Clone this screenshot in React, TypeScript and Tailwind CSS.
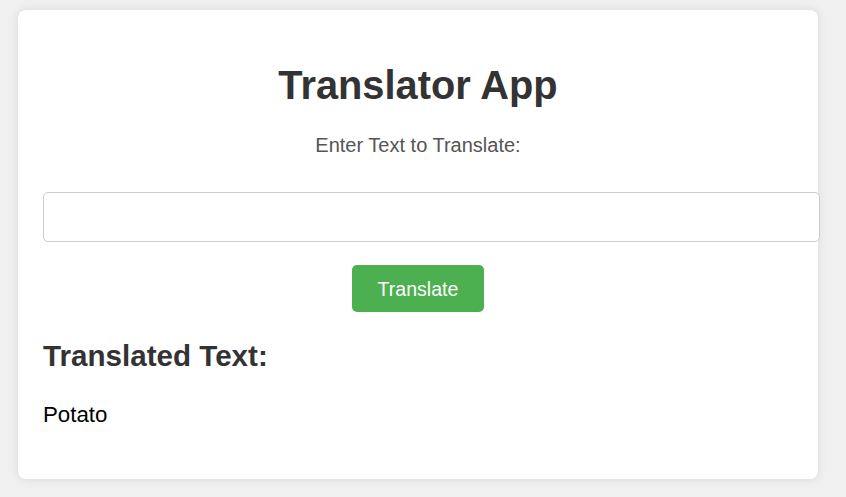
import React from "react";

export default function App() {
  return (
    <div
      className="min-h-[497px] w-[846px] bg-[#f0f0f0] pt-[10px] pl-[18px] overflow-hidden"
      style={{ fontFamily: '"Liberation Sans", Arial, sans-serif' }}
    >
      <div className="w-[800px] h-[469px] bg-white rounded-[8px] shadow-[0_0_10px_rgba(0,0,0,0.1)] px-[25px] pt-[53px]">
        <h1 className="text-center text-[39.8px] leading-[45px] font-bold text-[#333]">
          Translator App
        </h1>
        <p className="mt-[26px] text-center text-[20px] leading-[22px] text-[#555]">
          Enter Text to Translate:
        </p>
        <input
          type="text"
          className="mt-[36px] block w-[777px] h-[50px] border border-[#ccc] rounded-[5px] bg-white outline-none"
        />
        <div className="mt-[23px] flex justify-center">
          <button className="h-[47px] w-[132px] bg-[#4caf50] text-white rounded-[5px] text-[19.6px] leading-[22px] pt-[13px] pb-[12px]">
            Translate
          </button>
        </div>
        <h2 className="mt-[27px] text-[29.6px] leading-[33px] font-bold text-[#333]">
          Translated Text:
        </h2>
        <p className="mt-[30px] text-[22.3px] leading-[25px] text-black">Potato</p>
      </div>
    </div>
  );
}
